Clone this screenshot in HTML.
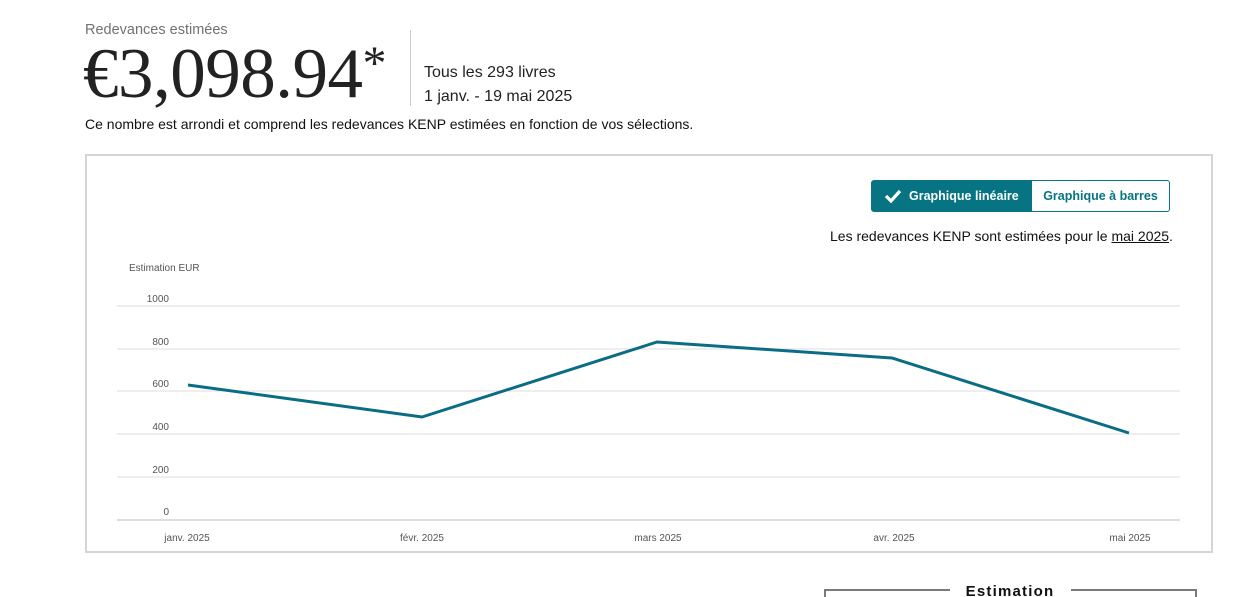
<!DOCTYPE html>
<html><head><meta charset="utf-8"><style>
body{margin:0;width:1247px;height:597px;background:#fff;font-family:"Liberation Sans",sans-serif;position:relative;overflow:hidden;color:#0f1111}
.a{position:absolute;white-space:nowrap}
</style></head><body>
<div class="a" style="left:85px;top:22px;font-size:14.5px;color:#6f7373">Redevances estimées</div>
<div class="a" style="left:83px;top:24px;font-family:'Liberation Serif',serif;font-size:71px;color:#222;letter-spacing:-0.5px;line-height:80px">€3,098.94<span style="font-size:48px;vertical-align:18px">*</span></div>
<div class="a" style="left:410px;top:30px;width:1px;height:76px;background:#ccc"></div>
<div class="a" style="left:424px;top:64px;font-size:16px;color:#222">Tous les 293 livres</div>
<div class="a" style="left:424px;top:88px;font-size:16px;color:#222">1 janv. - 19 mai 2025</div>
<div class="a" style="left:85px;top:116px;font-size:14px;color:#111">Ce nombre est arrondi et comprend les redevances KENP estimées en fonction de vos sélections.</div>
<div class="a" style="left:85px;top:154px;width:1124px;height:395px;border:2px solid #d5d5d5"></div>
<div class="a" style="left:871px;top:180px;width:159px;height:30px;background:#067483;border:1px solid #067483;border-radius:3px 0 0 3px;color:#fff;font-size:12.5px;font-weight:bold;line-height:30px">
<svg width="18" height="14" style="position:absolute;left:12px;top:8px" viewBox="0 0 18 14"><path d="M2 7l5 5 9-10" stroke="#fff" stroke-width="3.2" fill="none"/></svg>
<span style="position:absolute;left:37px">Graphique linéaire</span></div>
<div class="a" style="left:1031px;top:180px;width:137px;height:30px;border:1px solid #067483;border-radius:0 3px 3px 0;color:#067483;font-size:12.5px;font-weight:bold;line-height:30px;text-align:center">Graphique à barres</div>
<div class="a" style="left:830px;top:228px;font-size:14px;color:#111">Les redevances KENP sont estimées pour le <span style="text-decoration:underline">mai 2025</span>.</div>
<svg class="a" style="left:0;top:0" width="1247" height="597">
<g font-family="Liberation Sans,sans-serif" font-size="10" fill="#555">
<text x="129" y="271">Estimation EUR</text>
<text x="169" y="302" text-anchor="end">1000</text>
<text x="169" y="345" text-anchor="end">800</text>
<text x="169" y="387" text-anchor="end">600</text>
<text x="169" y="430" text-anchor="end">400</text>
<text x="169" y="473" text-anchor="end">200</text>
<text x="169" y="515" text-anchor="end">0</text>
<text x="187" y="541" text-anchor="middle">janv. 2025</text>
<text x="422" y="541" text-anchor="middle">févr. 2025</text>
<text x="658" y="541" text-anchor="middle">mars 2025</text>
<text x="894" y="541" text-anchor="middle">avr. 2025</text>
<text x="1130" y="541" text-anchor="middle">mai 2025</text>
</g>
<g stroke="#ddd" stroke-width="1">
<line x1="117" x2="1180" y1="306" y2="306"/><line x1="117" x2="1180" y1="349" y2="349"/>
<line x1="117" x2="1180" y1="391" y2="391"/><line x1="117" x2="1180" y1="434" y2="434"/>
<line x1="117" x2="1180" y1="477" y2="477"/></g>
<line x1="117" x2="1180" y1="520" y2="520" stroke="#bbb"/>
<polyline points="188,385 422,417 657,342 892,358 1129,433" fill="none" stroke="#0b6c86" stroke-width="3"/>
<path d="M825 597V590H950M1071 590H1196V597" stroke="#7a7a7a" stroke-width="2" fill="none"/>
<text x="1010" y="596" text-anchor="middle" font-family="Liberation Sans,sans-serif" font-size="15" font-weight="bold" letter-spacing="1.2" fill="#111">Estimation</text>
</svg>
</body></html>
